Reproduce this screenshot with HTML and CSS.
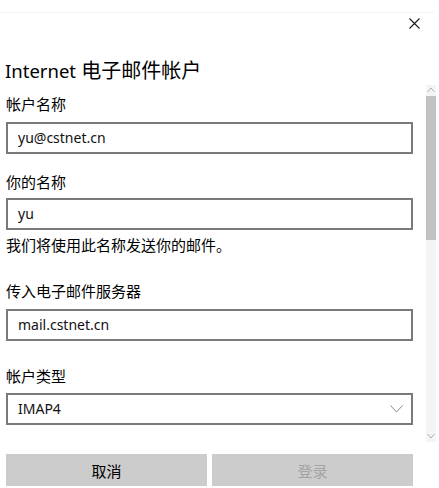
FILE: index.html
```html
<!DOCTYPE html>
<html lang="zh-CN">
<head>
    <meta charset="UTF-8">
    <title>Internet 电子邮件帐户</title>
    <link rel="stylesheet" href="styles.css">
</head>
<body>
    <div class="topLine"></div>
    <div class="header">
        <button class="closeBtn" aria-label="关闭">
            <svg width="11" height="11" viewBox="0 0 11 11"><path d="M0.5 0.5 L10.5 10.5 M10.5 0.5 L0.5 10.5" stroke="#1a1a1a" stroke-width="1.1" fill="none"/></svg>
        </button>
    </div>
    <h1 class="title"><span class="latin">Internet</span> 电子邮件帐户</h1>

    <div class="scrollArea">
        <form class="accountForm" onsubmit="return false">
            <label class="fieldLabel">帐户名称</label>
            <div class="textBox">yu@cstnet.cn</div>

            <label class="fieldLabel second">你的名称</label>
            <div class="textBox">yu</div>
            <p class="hint">我们将使用此名称发送你的邮件。</p>

            <label class="fieldLabel third">传入电子邮件服务器</label>
            <div class="textBox">mail.cstnet.cn</div>

            <label class="fieldLabel fourth">帐户类型</label>
            <div class="textBox selectBox">
                <span>IMAP4</span>
                <svg width="13" height="8" viewBox="0 0 13 8"><path d="M0.5 0.5 L6.5 7 L12.5 0.5" stroke="#8a8a8a" stroke-width="1" fill="none"/></svg>
            </div>
        </form>

        <div class="scrollBar">
            <svg class="arrow" width="8" height="6" viewBox="0 0 8 6"><path d="M0.5 5 L4 1 L7.5 5" stroke="#b0b0b0" stroke-width="1" fill="none"/></svg>
            <div class="thumb"></div>
            <div class="track"></div>
            <svg class="arrow" width="8" height="6" viewBox="0 0 8 6"><path d="M0.5 1 L4 5 L7.5 1" stroke="#b0b0b0" stroke-width="1" fill="none"/></svg>
        </div>
    </div>

    <div class="btnRow">
        <button class="dlgBtn">取消</button>
        <button class="dlgBtn disabled">登录</button>
    </div>
</body>
</html>
```

FILE: styles.css
```css
*{
    box-sizing: border-box;
    font-family: "Noto Sans", "Noto Sans CJK SC", sans-serif;
}

body{
    margin: 0;
    background: #ffffff;
    color: #000000;
}

.topLine{
    height: 13px;
    margin-right: 4px;
    border-bottom: 1px solid #f7f5ee;
}

.header{
    display: flex;
    justify-content: flex-end;
    padding-right: 19px;
    height: 44px;
}

.closeBtn{
    margin-top: 5px;
    width: 11px;
    height: 11px;
    padding: 0;
    border: none;
    background: transparent;
    display: flex;
}

.title{
    margin: 0 0 0 5px;
    font-size: 20px;
    font-weight: normal;
    line-height: 28px;
}

.title .latin{
    font-size: 18.5px;
}

.scrollArea{
    display: flex;
    height: 357px;
}

.accountForm{
    width: 407px;
    margin-left: 6px;
    padding-top: 9px;
    display: flex;
    flex-direction: column;
}

.fieldLabel{
    font-size: 15px;
    line-height: 20px;
}

.fieldLabel.second{
    margin-top: 18px;
}

.fieldLabel.third{
    margin-top: 26px;
}

.fieldLabel.fourth{
    margin-top: 25px;
}

.textBox{
    margin-top: 8px;
    height: 32px;
    border: 2px solid #7a7a7a;
    padding: 0 10px;
    font-size: 14px;
    line-height: 28px;
    color: #111111;
}

.fieldLabel.second + .textBox{
    margin-top: 6px;
}

.fieldLabel.fourth + .textBox{
    margin-top: 7px;
}

.selectBox{
    display: flex;
    justify-content: space-between;
    align-items: center;
    padding-right: 8px;
}

.hint{
    margin: 5px 0 0 0;
    font-size: 15px;
    line-height: 20px;
}

.scrollBar{
    margin-left: 13px;
    width: 10px;
    display: flex;
    flex-direction: column;
    align-items: center;
    background: #f4f4f4;
}

.scrollBar .arrow{
    margin: 2px 0 3px 0;
}

.thumb{
    width: 10px;
    height: 144px;
    background: #c2c2c2;
}

.track{
    flex: 1;
}

.btnRow{
    display: flex;
    gap: 5px;
    margin: 12px 0 0 6px;
    width: 407px;
}

.dlgBtn{
    flex: 1;
    height: 32px;
    border: none;
    background: #cccccc;
    font-size: 15px;
    color: #000000;
}

.dlgBtn.disabled{
    color: #a3a3a3;
}
```
